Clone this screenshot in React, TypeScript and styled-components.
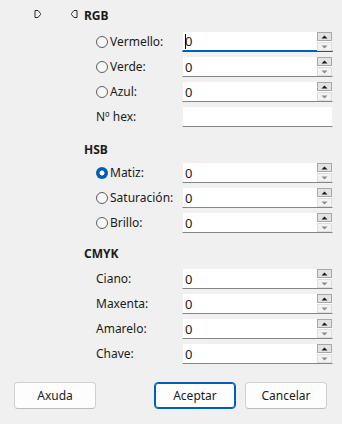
import React from 'react';
import styled, { createGlobalStyle } from 'styled-components';

const GlobalStyle = createGlobalStyle`
  html, body {
    margin: 0;
    padding: 0;
    background: #f0f0f0;
  }
  body {
    font-family: "Noto Sans", "Segoe UI", sans-serif;
    font-size: 12px;
    color: #1b1b1b;
  }
`;

const Dialog = styled.div`
  width: 342px;
  height: 424px;
  display: flex;
  flex-direction: column;
  box-sizing: border-box;
`;

const Top = styled.div`
  display: flex;
`;

const Gutter = styled.div`
  width: 84px;
  display: flex;
  gap: 28px;
  padding: 10px 0 0 34px;
  box-sizing: border-box;
`;

const Form = styled.div`
  display: flex;
  flex-direction: column;
  padding-top: 8px;
`;

const SectionTitle = styled.div<{ $gap: number; $top?: number }>`
  font-weight: 700;
  height: 16px;
  line-height: 16px;
  margin-top: ${p => p.$top ?? 0}px;
  margin-bottom: ${p => p.$gap}px;
`;

const Rows = styled.div`
  display: flex;
  flex-direction: column;
  gap: 4px;
  padding-left: 12px;
`;

const Row = styled.div`
  display: grid;
  grid-template-columns: 86px 151px;
  align-items: center;
  height: 21px;
`;

const Label = styled.label`
  display: flex;
  align-items: center;
  white-space: nowrap;
`;

const Radio = styled.span<{ $on?: boolean }>`
  width: 12px;
  height: 12px;
  border-radius: 50%;
  box-sizing: border-box;
  flex: none;
  margin-right: 2px;
  ${p =>
    p.$on
      ? `background: radial-gradient(circle, #fff 0 2.2px, #005fb8 2.8px);`
      : `background: #f7f7f7; border: 1px solid #5d5d5d;`}
`;

const Field = styled.div<{ $focus?: boolean }>`
  position: relative;
  height: 21px;
  box-sizing: border-box;
  background: #fff;
  border: 1px solid #f0f0f0;
  border-bottom: 1px solid #868686;
  ${p => p.$focus && `border-bottom: 2px solid #005fb8;`}
  display: flex;
  align-items: center;
  padding-left: 2px;
`;

const Value = styled.span`
  font-size: 13px;
  line-height: 16px;
  color: #1b1b1b;
`;

const Caret = styled.span`
  width: 1px;
  height: 15px;
  background: #000;
  margin-right: -1px;
`;

const Spinner = styled.div`
  position: absolute;
  right: 0px;
  top: 0px;
  width: 15px;
  display: flex;
  flex-direction: column;
  gap: 1px;
`;

const Step = styled.span<{ $off?: boolean }>`
  height: 9px;
  box-sizing: border-box;
  display: flex;
  align-items: center;
  justify-content: center;
  background: ${p => (p.$off ? '#f3f3f3' : '#e3e3e3')};
  border: 1px solid ${p => (p.$off ? '#dedede' : '#a8a8a8')};
`;

const Buttons = styled.div`
  display: flex;
  justify-content: space-between;
  padding: 0 15px 0 14px;
  margin-top: 18px;
`;

const Group = styled.div`
  display: flex;
  gap: 9px;
`;

const Button = styled.button<{ $primary?: boolean }>`
  width: 82px;
  height: 27px;
  border-radius: 4px;
  background: #fdfdfd;
  border: 1px solid ${p => (p.$primary ? '#005fb8' : '#d0d0d0')};
  box-shadow: ${p => (p.$primary ? 'inset 0 0 0 1px #005fb8' : 'none')};
  border-bottom-color: ${p => (p.$primary ? '#005fb8' : '#bcbcbc')};
  font-family: "Noto Sans", "Segoe UI", sans-serif;
  font-size: 12px;
  color: #1b1b1b;
  padding: 0;
`;

function Arrow({ left }: { left?: boolean }) {
  return (
    <svg width="8" height="8" viewBox="0 0 8 8" style={{ transform: left ? 'scaleX(-1)' : undefined }}>
      <path d="M1 0.5 H4 L6.5 3.5 V4.5 L4 7.5 H1 Z" fill="none" stroke="#2b2b2b" strokeWidth="1" />
    </svg>
  );
}

function Tri({ down, off }: { down?: boolean; off?: boolean }) {
  return (
    <svg width="7" height="4" viewBox="0 0 7 4">
      <path d={down ? 'M0.5 0.5 H6.5 L3.5 3.5 Z' : 'M3.5 0.5 L6.5 3.5 H0.5 Z'} fill={off ? '#8c8c8c' : '#1a1a1a'} />
    </svg>
  );
}

interface FieldRowProps {
  label: string;
  radio?: boolean;
  checked?: boolean;
  value?: string;
  spin?: boolean;
  focus?: boolean;
}

function FieldRow({ label, radio, checked, value = '0', spin = true, focus }: FieldRowProps) {
  return (
    <Row>
      <Label>
        {radio && <Radio $on={checked} />}
        {label}
      </Label>
      <Field $focus={focus}>
        {focus && <Caret />}
        <Value>{value}</Value>
        {spin && (
          <Spinner>
            <Step>
              <Tri />
            </Step>
            <Step $off>
              <Tri down off />
            </Step>
          </Spinner>
        )}
      </Field>
    </Row>
  );
}

export default function App() {
  return (
    <>
      <GlobalStyle />
      <Dialog>
        <Top>
          <Gutter>
            <Arrow />
            <Arrow left />
          </Gutter>
          <Form>
            <SectionTitle $gap={7}>RGB</SectionTitle>
            <Rows>
              <FieldRow label="Vermello:" radio focus />
              <FieldRow label="Verde:" radio />
              <FieldRow label="Azul:" radio />
              <FieldRow label="Nº hex:" value="" spin={false} />
            </Rows>
            <SectionTitle $top={15} $gap={4}>HSB</SectionTitle>
            <Rows>
              <FieldRow label="Matiz:" radio checked />
              <FieldRow label="Saturación:" radio />
              <FieldRow label="Brillo:" radio />
            </Rows>
            <SectionTitle $top={13} $gap={6}>CMYK</SectionTitle>
            <Rows>
              <FieldRow label="Ciano:" />
              <FieldRow label="Maxenta:" />
              <FieldRow label="Amarelo:" />
              <FieldRow label="Chave:" />
            </Rows>
          </Form>
        </Top>
        <Buttons>
          <Button>Axuda</Button>
          <Group>
            <Button $primary>Aceptar</Button>
            <Button>Cancelar</Button>
          </Group>
        </Buttons>
      </Dialog>
    </>
  );
}
